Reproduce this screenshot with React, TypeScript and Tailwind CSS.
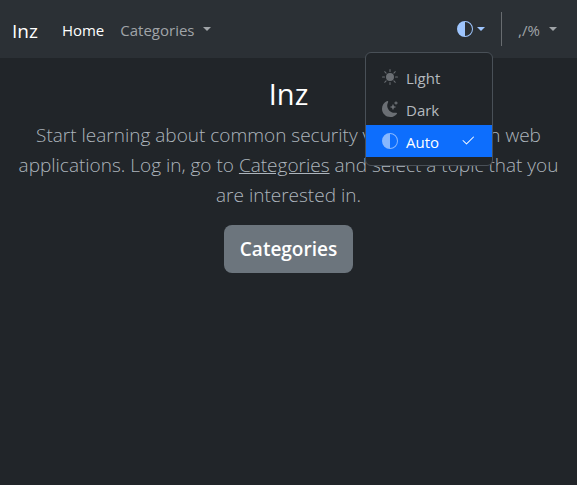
import { useState } from "react";
import type { IconType } from "react-icons";
import { BsCheck2, BsCircleHalf, BsMoonStarsFill, BsSunFill } from "react-icons/bs";

type Theme = "Light" | "Dark" | "Auto";

const themes: { name: Theme; Icon: IconType }[] = [
  { name: "Light", Icon: BsSunFill },
  { name: "Dark", Icon: BsMoonStarsFill },
  { name: "Auto", Icon: BsCircleHalf },
];

function Caret() {
  return (
    <span
      aria-hidden="true"
      className="h-0 w-0 border-x-4 border-t-4 border-x-transparent border-t-current"
    />
  );
}

function ThemePicker() {
  const [open, setOpen] = useState(true);
  const [theme, setTheme] = useState<Theme>("Auto");

  return (
    <div className="relative">
      <button
        type="button"
        aria-label="Toggle theme"
        aria-expanded={open}
        onClick={() => setOpen(!open)}
        className="flex h-10 items-center gap-1 px-2 text-[#9ec5fe]"
      >
        <BsCircleHalf size={16} />
        <Caret />
      </button>
      {open && (
        <div className="absolute top-full right-0 z-10 mt-[3px] w-32 rounded-md border border-[#495057] bg-[#212529] py-2">
          {themes.map(({ name, Icon }) => (
            <button
              key={name}
              type="button"
              aria-pressed={theme === name}
              onClick={() => setTheme(name)}
              className={`flex h-8 w-full items-center gap-2 px-4 ${
                theme === name ? "bg-[#0d6efd] text-white" : "text-[#b4b9be]"
              }`}
            >
              <Icon size={16} className="shrink-0 opacity-50" />
              <span className="pt-0.5">{name}</span>
              {theme === name && <BsCheck2 size={16} className="ml-auto" />}
            </button>
          ))}
        </div>
      )}
    </div>
  );
}

export default function App() {
  return (
    <div className="min-h-screen bg-[#212529] font-['Open_Sans','Noto_Sans',sans-serif] text-[15px] leading-6 text-[#dee2e6]">
      <header className="flex h-[58px] items-center bg-[#2b3035] px-3">
        <a href="#" className="mr-6 pt-1 text-[19px] text-white">
          Inz
        </a>
        <nav className="flex items-center gap-4">
          <a href="#" className="pt-0.5 text-white">
            Home
          </a>
          <button type="button" className="flex items-center gap-2 text-[#a0a4a8]">
            <span className="pt-0.5">Categories</span>
            <Caret />
          </button>
        </nav>
        <div className="ml-auto flex items-center">
          <ThemePicker />
          <div className="mx-2 h-[34px] w-px bg-[#686c70]" />
          <button
            type="button"
            className="flex w-[55px] items-center justify-between px-2 text-[#a0a4a8]"
          >
            <span className="pt-0.5">,/%</span>
            <Caret />
          </button>
        </div>
      </header>
      <main className="px-3 pt-4 text-center">
        <h1 className="text-[29px] leading-10 text-white">Inz</h1>
        <p className="mt-1.5 text-[19px] leading-[30px] font-light text-[#adb5bd]">
          Start learning about common security vulnerabilities in web applications. Log in, go to{" "}
          <a href="#" className="underline">
            Categories
          </a>{" "}
          and select a topic that you are interested in.
        </p>
        <button
          type="button"
          className="mt-[15px] h-12 rounded-lg bg-[#6c757d] px-4 text-[19px] font-semibold text-white"
        >
          Categories
        </button>
      </main>
    </div>
  );
}
